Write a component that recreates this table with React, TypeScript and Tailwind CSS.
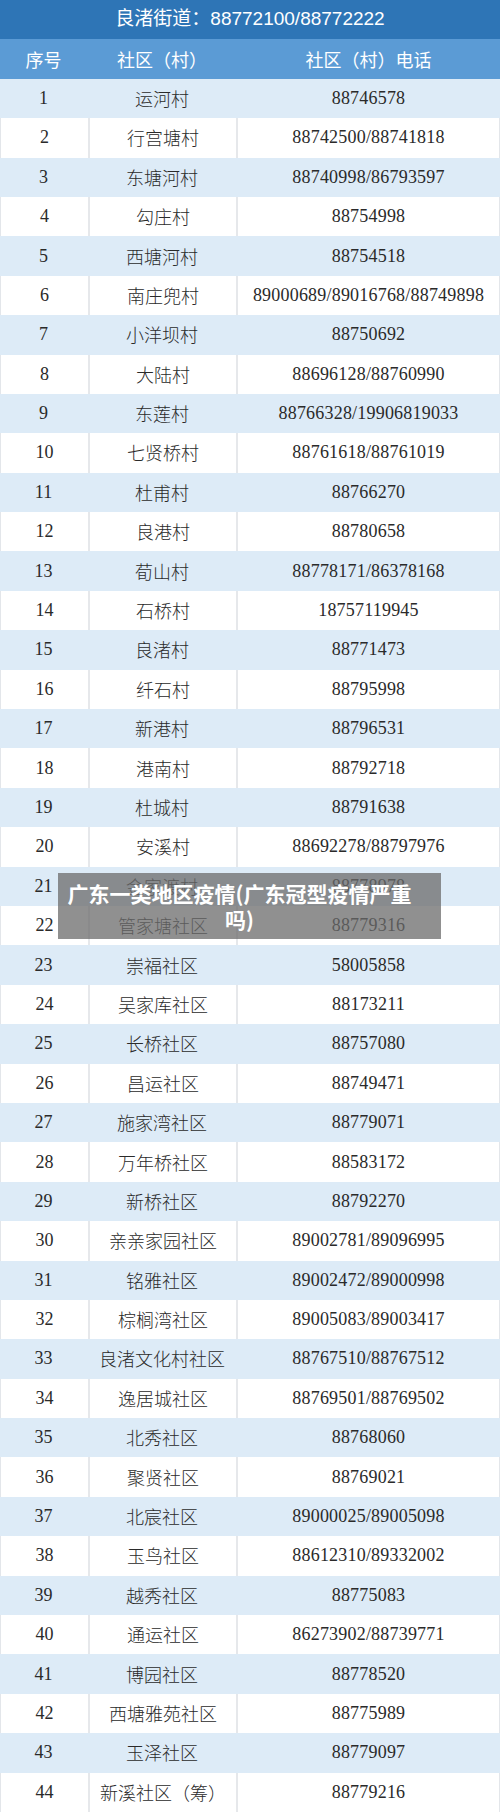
const rows: [string, string][] = [
  ['运河村', '88746578'],
  ['行宫塘村', '88742500/88741818'],
  ['东塘河村', '88740998/86793597'],
  ['勾庄村', '88754998'],
  ['西塘河村', '88754518'],
  ['南庄兜村', '89000689/89016768/88749898'],
  ['小洋坝村', '88750692'],
  ['大陆村', '88696128/88760990'],
  ['东莲村', '88766328/19906819033'],
  ['七贤桥村', '88761618/88761019'],
  ['杜甫村', '88766270'],
  ['良港村', '88780658'],
  ['荀山村', '88778171/86378168'],
  ['石桥村', '18757119945'],
  ['良渚村', '88771473'],
  ['纤石村', '88795998'],
  ['新港村', '88796531'],
  ['港南村', '88792718'],
  ['杜城村', '88791638'],
  ['安溪村', '88692278/88797976'],
  ['金家渡村', '88778978'],
  ['管家塘社区', '88779316'],
  ['崇福社区', '58005858'],
  ['吴家库社区', '88173211'],
  ['长桥社区', '88757080'],
  ['昌运社区', '88749471'],
  ['施家湾社区', '88779071'],
  ['万年桥社区', '88583172'],
  ['新桥社区', '88792270'],
  ['亲亲家园社区', '89002781/89096995'],
  ['铭雅社区', '89002472/89000998'],
  ['棕榈湾社区', '89005083/89003417'],
  ['良渚文化村社区', '88767510/88767512'],
  ['逸居城社区', '88769501/88769502'],
  ['北秀社区', '88768060'],
  ['聚贤社区', '88769021'],
  ['北宸社区', '89000025/89005098'],
  ['玉鸟社区', '88612310/89332002'],
  ['越秀社区', '88775083'],
  ['通运社区', '86273902/88739771'],
  ['博园社区', '88778520'],
  ['西塘雅苑社区', '88775989'],
  ['玉泽社区', '88779097'],
  ['新溪社区（筹）', '88779216'],
];

const serif = "font-['Liberation_Serif','Noto_Sans_CJK_SC',serif]";

export default function App() {
  return (
    <div className="w-[500px] bg-white relative">
      <div className="h-[39.4px] bg-[#2e75b6] flex items-center justify-center text-white text-[19px] font-['Liberation_Sans','Noto_Sans_CJK_SC',sans-serif]">
        良渚街道：88772100/88772222
      </div>
      <div className="h-[39.4px] bg-[#5b9bd5] grid grid-cols-[87px_150px_1fr] text-white text-[18px] font-['Noto_Sans_CJK_SC',sans-serif]">
        <div className="flex items-center justify-center">序号</div>
        <div className="flex items-center justify-center">社区（村）</div>
        <div className="flex items-center justify-center">社区（村）电话</div>
      </div>
      {rows.map(([name, phone], i) => {
        const blue = i % 2 === 0;
        return (
          <div
            key={i}
            className={
              blue
                ? 'h-[39.4px] bg-[#ddebf7] grid grid-cols-[87px_150px_1fr] text-[#2a2a2a] text-[18px]'
                : 'h-[39.4px] bg-white grid grid-cols-[87px_150px_1fr] text-[#2a2a2a] text-[18px] border-x border-[#e3e6ea]'
            }
          >
            <div className={`flex items-center justify-center ${serif}`}>{i + 1}</div>
            <div
              className={
                blue
                  ? "flex items-center justify-center font-['Noto_Sans_CJK_SC',serif] text-[18px] font-light"
                  : "flex items-center justify-center font-['Noto_Sans_CJK_SC',serif] text-[18px] font-light border-x-2 border-[#e6e8eb]"
              }
            >
              {name}
            </div>
            <div className={`flex items-center justify-center tracking-[0.2px] ${serif}`}>{phone}</div>
          </div>
        );
      })}
      <div className="absolute left-[58px] top-[873px] w-[383px] h-[66px] bg-[#6b6b6b]/75 flex items-center pl-[9px] pr-[29px]">
        <p className="w-full text-white font-bold text-[21px] leading-[26px] text-center font-['Noto_Sans_CJK_SC',sans-serif]">
          广东一类地区疫情(广东冠型疫情严重吗)
        </p>
      </div>
    </div>
  );
}
